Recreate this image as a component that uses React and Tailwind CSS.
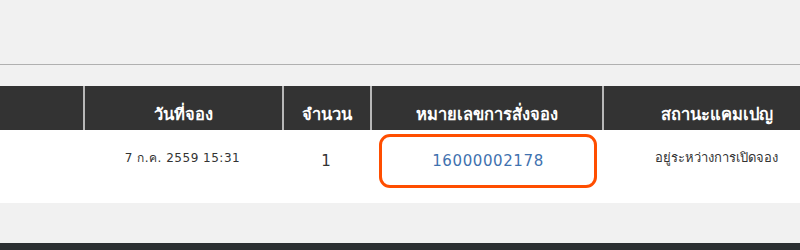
const COLS = [
  { w: 'w-[83px]', label: '' },
  { w: 'w-[199px]', label: 'วันที่จอง' },
  { w: 'w-[88px]', label: 'จำนวน' },
  { w: 'w-[232px]', label: 'หมายเลขการสั่งจอง' },
  { w: 'w-[228px]', label: 'สถานะแคมเปญ' },
];

export default function App() {
  return (
    <div className="h-[250px] w-[800px] overflow-hidden bg-[#f1f1f1] font-['DejaVu_Sans',sans-serif]">
      <div className="h-[64px]" />
      <div className="h-px bg-[#b0b0b0]" />
      <div className="h-[21px]" />

      <div className="w-[830px]">
        {/* header */}
        <div className="flex h-[44px] bg-[#333333]">
          {COLS.map((c, i) => (
            <div
              key={i}
              className={`${c.w} flex items-end justify-center pb-[2px] text-[16.5px] font-bold text-white ${i > 0 ? 'border-l-2 border-[#b8b8b8]' : ''}`}
            >
              {c.label}
            </div>
          ))}
        </div>

        {/* row */}
        <div className="flex h-[73px] bg-white text-[#333]">
          <div className="w-[83px]" />
          <div className="flex w-[199px] items-center justify-center pb-[18px] text-[12px] tracking-[0.5px]">
            7 ก.ค. 2559 15:31
          </div>
          <div className="flex w-[88px] items-center justify-center pb-[10px] text-[15px]">1</div>
          <div className="flex w-[232px] items-start justify-start pl-[9px] pt-[4px]">
            <div className="flex h-[54px] w-[218px] items-center justify-center rounded-[11px] border-[3px] border-[#ff4e00] pt-[1px] text-[15px] tracking-[0.6px] text-[#3f72af]">
              16000002178
            </div>
          </div>
          <div className="flex w-[228px] items-center justify-center pb-[18px] text-[13px]">
            อยู่ระหว่างการเปิดจอง
          </div>
        </div>
      </div>

      <div className="h-[40px]" />
      <div className="h-[7px] bg-[#2b2f31]" />
    </div>
  );
}
